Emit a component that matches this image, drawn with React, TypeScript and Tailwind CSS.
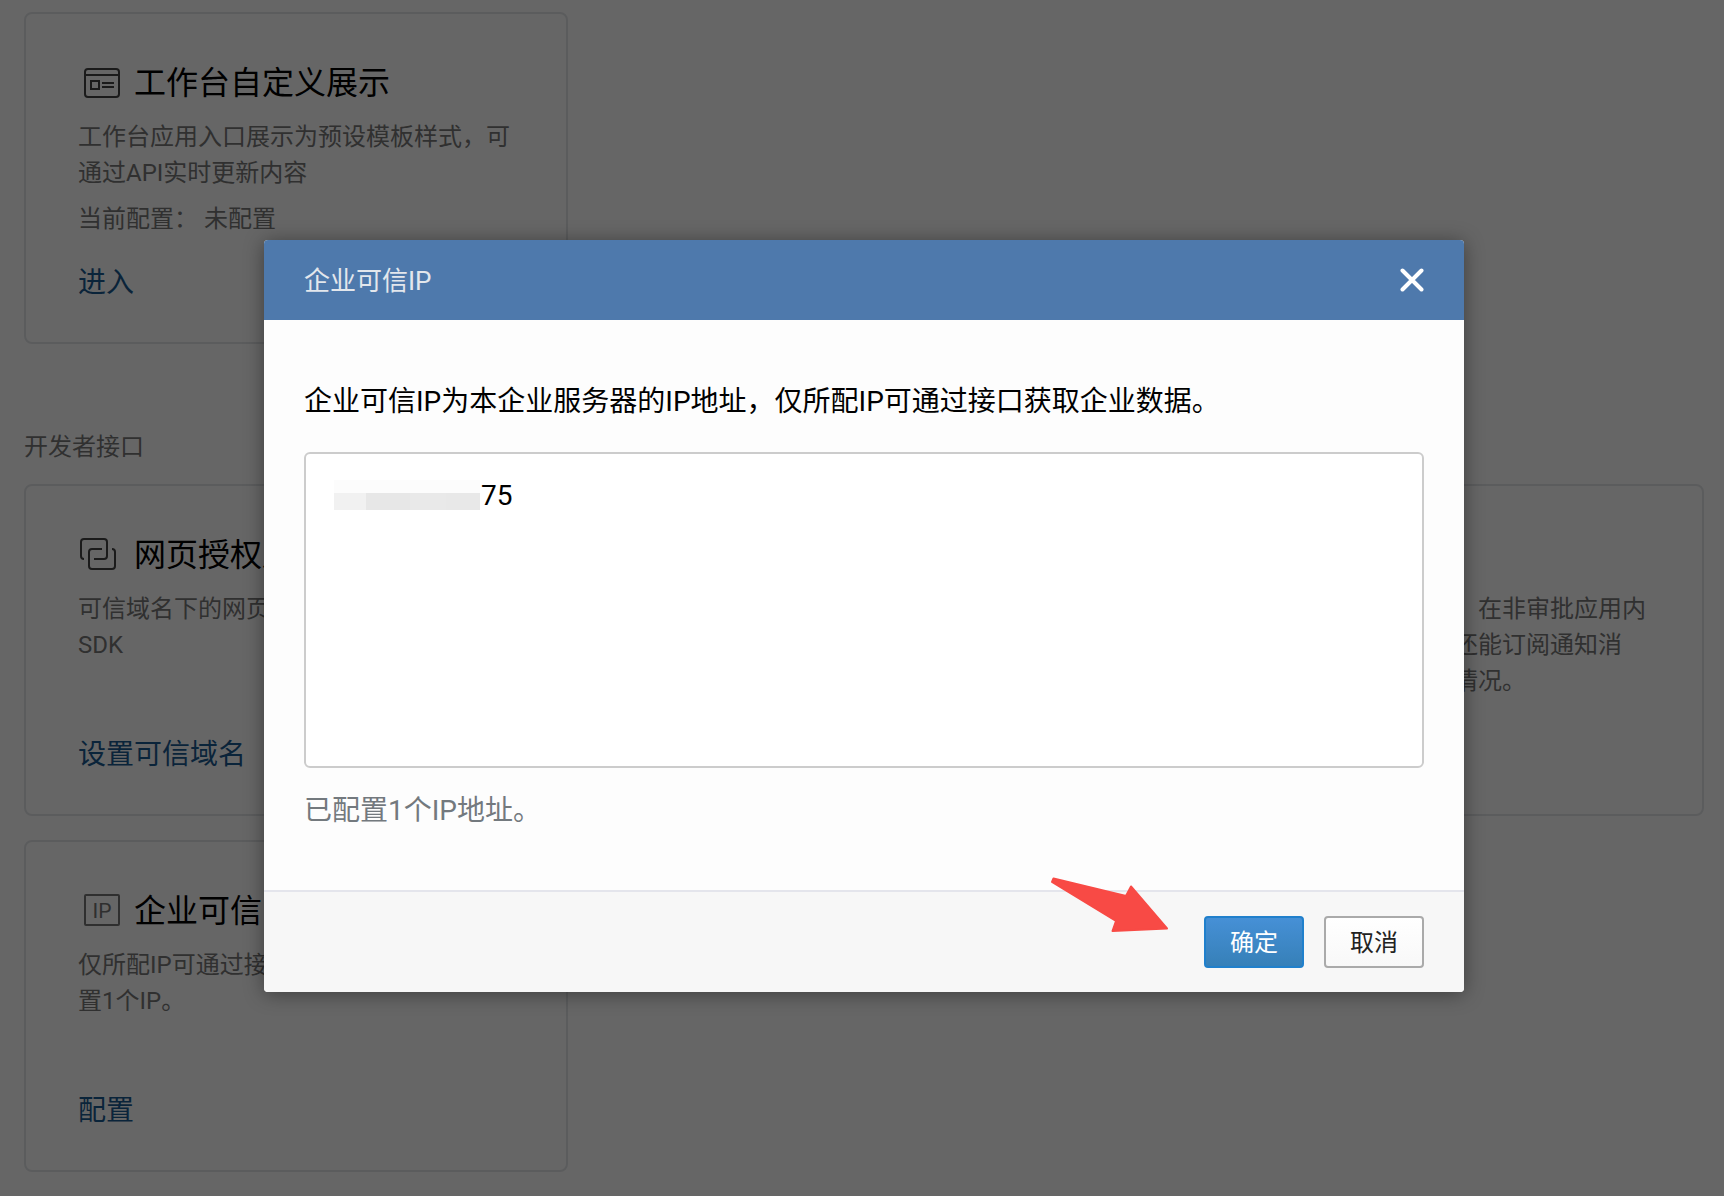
import { useState } from 'react';
import type { ReactNode } from 'react';

function TemplateIcon() {
  return (
    <svg className="w-11 h-9 shrink-0" viewBox="0 0 44 36" fill="none" stroke="#444" strokeWidth="2" aria-hidden="true">
      <rect x="7" y="4" width="34" height="28" rx="3" />
      <path d="M7 10h34" />
      <rect x="13" y="16" width="8" height="8" />
      <path d="M24 18h12M24 22h12" />
    </svg>
  );
}

function LinkedIcon() {
  return (
    <svg className="w-11 h-9 shrink-0" viewBox="0 0 44 36" fill="none" stroke="#444" strokeWidth="2" aria-hidden="true">
      <path d="M6 22a3 3 0 0 1-3-3V5a3 3 0 0 1 3-3h20a3 3 0 0 1 3 3v14a3 3 0 0 1-3 3H16" />
      <path d="M24 12H14a3 3 0 0 0-3 3v14a3 3 0 0 0 3 3h20a3 3 0 0 0 3-3V15a3 3 0 0 0-3-3" />
    </svg>
  );
}

function IpIcon() {
  return (
    <svg className="w-11 h-9 shrink-0" viewBox="0 0 44 36" fill="none" aria-hidden="true">
      <rect x="7" y="2" width="34" height="30" rx="1" stroke="#777" strokeWidth="2" />
      <text x="24" y="25" textAnchor="middle" fontSize="21" fontFamily="Roboto, sans-serif" fill="#777">IP</text>
    </svg>
  );
}

interface CardProps {
  icon: ReactNode;
  title: string;
  desc: string;
  status?: string;
  action: string;
}

function Card({ icon, title, desc, status, action }: CardProps) {
  return (
    <section className="flex flex-col min-h-[332px] px-13 pt-11 pb-[39px] border-2 border-[#e4e6e9] rounded-lg bg-white">
      <div className="flex items-center gap-3 h-[50px]">
        {icon}
        <h3 className="text-[32px] text-black whitespace-nowrap">{title}</h3>
      </div>
      <p className="mt-[11px] text-2xl leading-9 text-[#787878]">{desc}</p>
      {status && <p className="mt-[10px] text-2xl leading-9 text-[#787878]">当前配置： {status}</p>}
      <a href="#" className="mt-auto self-start text-[28px] leading-10 text-[#1b5a92]">{action}</a>
    </section>
  );
}

function TrustedIpDialog() {
  const [ip, setIp] = useState('75');
  return (
    <div
      role="dialog"
      aria-labelledby="dialog-title"
      className="relative w-full max-w-[1200px] rounded-sm bg-[#fdfdfd] shadow-[0_2px_20px_rgba(0,0,0,0.4)]"
    >
      <header className="flex items-center justify-between h-20 px-10 rounded-t-sm bg-[#4e79ac]">
        <h2 id="dialog-title" className="pt-0.5 text-[26px] text-[#e3e7ec]">企业可信IP</h2>
        <button type="button" aria-label="关闭">
          <svg className="w-6 h-6" viewBox="0 0 24 24" stroke="#fff" strokeWidth="4" strokeLinecap="round" aria-hidden="true">
            <path d="M2.5 2.5l19 19M21.5 2.5l-19 19" />
          </svg>
        </button>
      </header>
      <div className="px-10 pt-[62px] pb-[59px]">
        <label htmlFor="ip-list" className="block mb-[30px] text-[28px] leading-10 text-black">
          企业可信IP为本企业服务器的IP地址，仅所配IP可通过接口获取企业数据。
        </label>
        <div className="relative">
          <textarea
            id="ip-list"
            value={ip}
            onChange={(e) => setIp(e.target.value)}
            className="block w-full h-[316px] px-7 py-[22px] border-2 border-[#ccc] rounded-md bg-white text-[28px] leading-10 text-black indent-[147px] resize-none outline-none"
          />
          {/* redacted part of the address */}
          <div className="absolute left-[30px] top-7 flex w-[146px] h-[30px] flex-col pointer-events-none">
            <div className="h-[13px] bg-[#fcfcfc]" />
            <div className="flex flex-1">
              <div className="w-8 bg-[#f1f1f1]" />
              <div className="w-11 bg-[#e7e7e7]" />
              <div className="w-9 bg-[#e9e9e9]" />
              <div className="flex-1 bg-[#e8e8e8]" />
            </div>
          </div>
        </div>
        <p className="mt-[23px] text-[28px] leading-10 text-[#73797e]">已配置1个IP地址。</p>
      </div>
      <footer className="flex justify-end gap-5 px-10 py-6 border-t-2 border-[#e4e5ec] rounded-b-sm bg-[#f7f7f7]">
        <button type="button" className="w-[100px] h-[52px] pt-0.5 border-2 border-[#2080cc] rounded bg-linear-to-b from-[#4690d6] to-[#3680b8] text-2xl text-white">
          确定
        </button>
        <button type="button" className="w-[100px] h-[52px] pt-0.5 border-2 border-[#aaa] rounded bg-linear-to-b from-white to-[#f8f8f8] text-2xl text-[#222]">
          取消
        </button>
      </footer>
      {/* pointer to the confirm button */}
      <svg className="absolute right-[294px] bottom-[59px] w-[120px] h-[57px] pointer-events-none" viewBox="0 0 120 57" aria-hidden="true">
        <path
          d="M3.5 2.5L76 20l5-9.500L117 52.500 62.500 55 66 45 2 6z"
          fill="#f84a45"
          stroke="#f84a45"
          strokeWidth="2"
          strokeLinejoin="round"
        />
      </svg>
    </div>
  );
}

export default function App() {
  return (
    <div className="relative min-h-screen bg-white font-[Roboto,'Noto_Sans_CJK_SC',sans-serif]">
      <main className="pt-3 pb-6 pl-6 pr-5">
        <div className="grid grid-cols-3 gap-6">
          <Card
            icon={<TemplateIcon />}
            title="工作台自定义展示"
            desc="工作台应用入口展示为预设模板样式，可通过API实时更新内容"
            status="未配置"
            action="进入"
          />
        </div>
        <h2 className="mt-[85px] mb-[19px] text-2xl leading-9 text-[#787878]">开发者接口</h2>
        <div className="grid grid-cols-3 gap-6">
          <Card
            icon={<LinkedIcon />}
            title="网页授权及JS-SDK"
            desc="可信域名下的网页可使用网页授权及JS-SDK"
            action="设置可信域名"
          />
          <Card
            icon={<LinkedIcon />}
            title="企业微信授权登录"
            desc="使用企业微信帐号登录已有的网页"
            action="设置"
          />
          <Card
            icon={<TemplateIcon />}
            title="审批接口"
            desc="通过审批流程引擎接口，在非审批应用内设置流程、发起审批，还能订阅通知消息，及时掌握审批变化情况。"
            action="设置"
          />
          <Card
            icon={<IpIcon />}
            title="企业可信IP"
            desc="仅所配IP可通过接口获取企业数据。已配置1个IP。"
            action="配置"
          />
        </div>
      </main>
      <div className="absolute inset-0 flex items-start justify-center pl-1 pt-60 bg-black/60">
        <TrustedIpDialog />
      </div>
    </div>
  );
}
